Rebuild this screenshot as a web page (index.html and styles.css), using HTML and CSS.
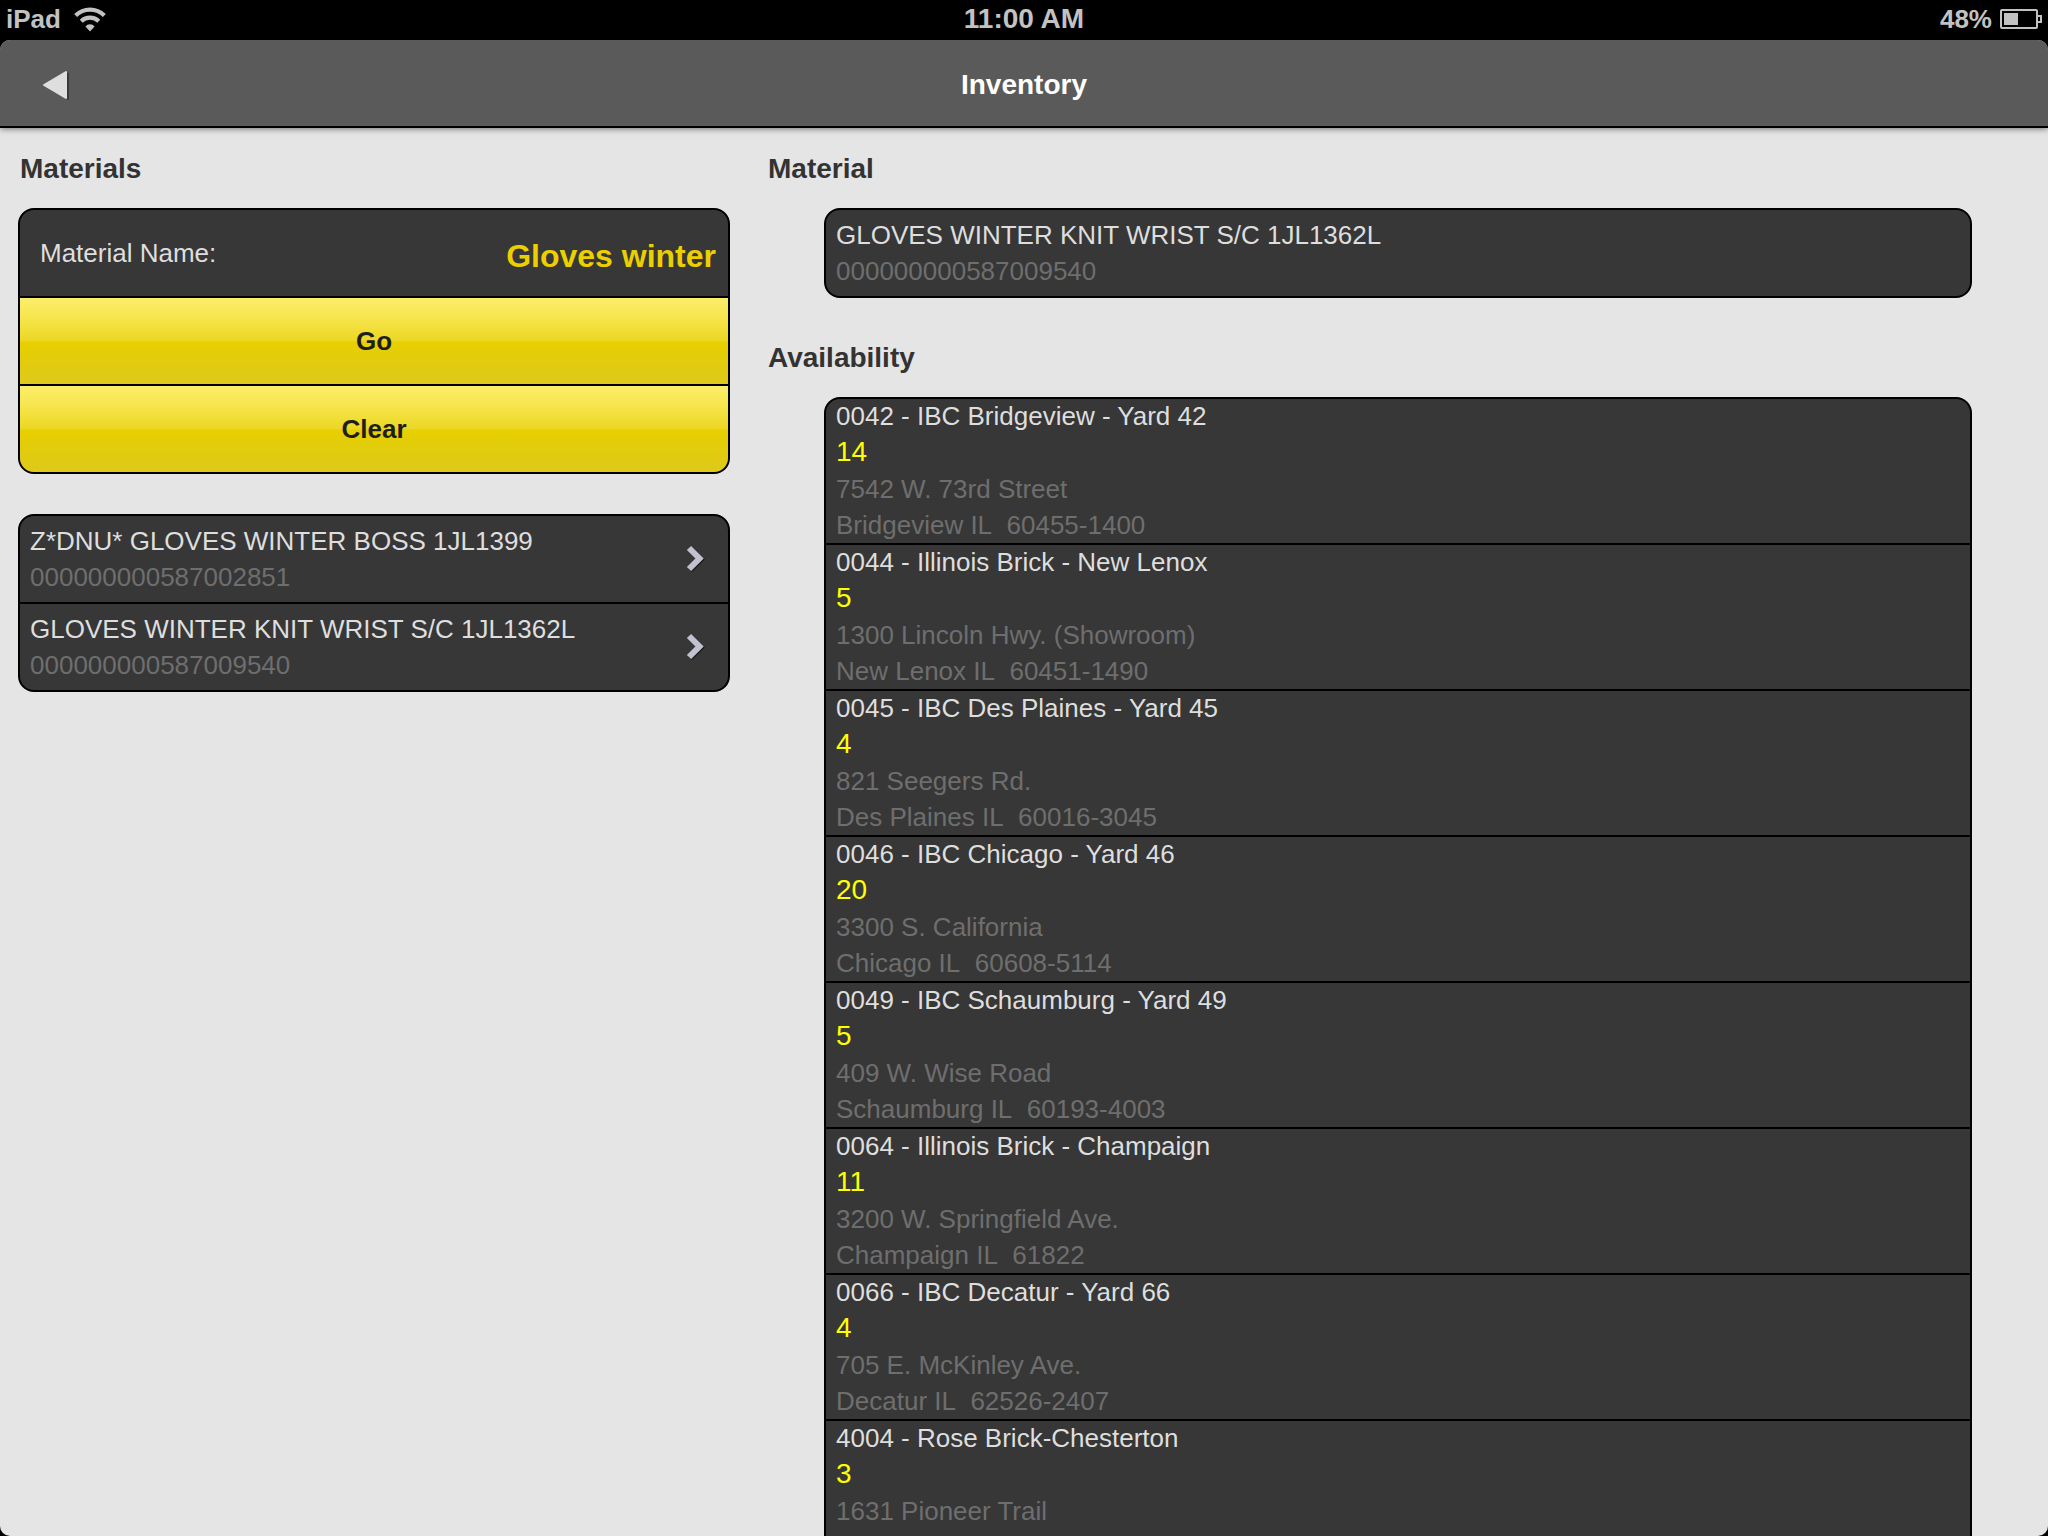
FILE: index.html
```
<!DOCTYPE html>
<html lang="en">
<head>
    <meta charset="UTF-8">
    <meta name="viewport" content="width=device-width, initial-scale=1">
    <title>Inventory</title>
    <link rel="stylesheet" href="styles.css">
</head>
<body>
<!-- Device status bar -->
<div class="status-bar">
    <div class="status-left">
        <span>iPad</span>
        <svg width="34" height="25" viewBox="0 0 32 24" aria-hidden="true">
            <path d="M2.2 8.2 A19.5 19.5 0 0 1 29.8 8.2" fill="none" stroke="#c2c2c2" stroke-width="4"/>
            <path d="M7.6 13.6 A12 12 0 0 1 24.4 13.6" fill="none" stroke="#c2c2c2" stroke-width="4"/>
            <path d="M16 23.5 L11.6 18.6 A6 6 0 0 1 20.4 18.6 Z" fill="#c2c2c2"/>
        </svg>
    </div>
    <div class="status-time">11:00 AM</div>
    <div class="status-right">
        <span>48%</span>
        <svg width="42" height="20" viewBox="0 0 42 20" aria-hidden="true">
            <rect x="1" y="1" width="36" height="18" rx="1" fill="none" stroke="#c2c2c2" stroke-width="2"/>
            <rect x="4" y="4" width="14" height="12" fill="#c2c2c2"/>
            <path d="M38 7 H41 V13 H38" fill="none" stroke="#c2c2c2" stroke-width="2"/>
        </svg>
    </div>
</div>

<div class="app">
    <header class="toolbar">
        <button type="button" class="back" aria-label="Back">
            <svg width="28" height="30" viewBox="0 0 28 30" aria-hidden="true">
                <path d="M3 15 L25 2.5 V28 Z" fill="#333" stroke="#333" stroke-width="2" stroke-linejoin="round" transform="translate(1 1)" opacity=".8"/>
                <path d="M2 15 L24 2 V28 Z" fill="#dedede" stroke="#dedede" stroke-width="2" stroke-linejoin="round"/>
            </svg>
        </button>
        <h1>Inventory</h1>
    </header>

    <main class="panes">
        <!-- Search form and results -->
        <section class="pane">
            <h2>Materials</h2>
            <form class="card">
                <div class="field">
                    <label for="material-name">Material Name:</label>
                    <input type="text" id="material-name" value="Gloves winter">
                </div>
                <button type="button" class="action">Go</button>
                <button type="button" class="action">Clear</button>
            </form>
            <ul class="card">
                <li>
                    <a href="#" class="material">
                        <span class="text">
                            <span class="name">Z*DNU* GLOVES WINTER BOSS 1JL1399</span>
                            <span class="muted">000000000587002851</span>
                        </span>
                        <svg width="20" height="28" viewBox="0 0 20 28" aria-hidden="true">
                            <path d="M4 4 L14.5 14.5 L4 25" fill="none" stroke="#1c1c1c" stroke-width="6"/>
                            <path d="M3 3 L13.5 13.5 L3 24" fill="none" stroke="#c2c1cf" stroke-width="6"/>
                        </svg>
                    </a>
                </li>
                <li>
                    <a href="#" class="material">
                        <span class="text">
                            <span class="name">GLOVES WINTER KNIT WRIST S/C 1JL1362L</span>
                            <span class="muted">000000000587009540</span>
                        </span>
                        <svg width="20" height="28" viewBox="0 0 20 28" aria-hidden="true">
                            <path d="M4 4 L14.5 14.5 L4 25" fill="none" stroke="#1c1c1c" stroke-width="6"/>
                            <path d="M3 3 L13.5 13.5 L3 24" fill="none" stroke="#c2c1cf" stroke-width="6"/>
                        </svg>
                    </a>
                </li>
            </ul>
        </section>

        <!-- Selected material and stock per yard -->
        <section class="pane detail">
            <h2>Material</h2>
            <div class="card">
                <div class="material">
                    <span class="text">
                        <span class="name">GLOVES WINTER KNIT WRIST S/C 1JL1362L</span>
                        <span class="muted">000000000587009540</span>
                    </span>
                </div>
            </div>

            <h2>Availability</h2>
            <ul class="card">
                <li class="yard">
                    <div class="name">0042 - IBC Bridgeview - Yard 42</div>
                    <div class="count">14</div>
                    <div class="muted">7542 W. 73rd Street</div>
                    <div class="muted">Bridgeview IL&nbsp; 60455-1400</div>
                </li>
                <li class="yard">
                    <div class="name">0044 - Illinois Brick - New Lenox</div>
                    <div class="count">5</div>
                    <div class="muted">1300 Lincoln Hwy. (Showroom)</div>
                    <div class="muted">New Lenox IL&nbsp; 60451-1490</div>
                </li>
                <li class="yard">
                    <div class="name">0045 - IBC Des Plaines - Yard 45</div>
                    <div class="count">4</div>
                    <div class="muted">821 Seegers Rd.</div>
                    <div class="muted">Des Plaines IL&nbsp; 60016-3045</div>
                </li>
                <li class="yard">
                    <div class="name">0046 - IBC Chicago - Yard 46</div>
                    <div class="count">20</div>
                    <div class="muted">3300 S. California</div>
                    <div class="muted">Chicago IL&nbsp; 60608-5114</div>
                </li>
                <li class="yard">
                    <div class="name">0049 - IBC Schaumburg - Yard 49</div>
                    <div class="count">5</div>
                    <div class="muted">409 W. Wise Road</div>
                    <div class="muted">Schaumburg IL&nbsp; 60193-4003</div>
                </li>
                <li class="yard">
                    <div class="name">0064 - Illinois Brick - Champaign</div>
                    <div class="count">11</div>
                    <div class="muted">3200 W. Springfield Ave.</div>
                    <div class="muted">Champaign IL&nbsp; 61822</div>
                </li>
                <li class="yard">
                    <div class="name">0066 - IBC Decatur - Yard 66</div>
                    <div class="count">4</div>
                    <div class="muted">705 E. McKinley Ave.</div>
                    <div class="muted">Decatur IL&nbsp; 62526-2407</div>
                </li>
                <li class="yard">
                    <div class="name">4004 - Rose Brick-Chesterton</div>
                    <div class="count">3</div>
                    <div class="muted">1631 Pioneer Trail</div>
                </li>
            </ul>
        </section>
    </main>
</div>
</body>
</html>
```

FILE: styles.css
```
* {
    box-sizing: border-box;
}
body {
    margin: 0;
    height: 100vh;
    display: flex;
    flex-direction: column;
    background: #000;
    font-family: "Liberation Sans", Arial, sans-serif;
    font-size: 26px;
    line-height: 36px;
}

/* status bar */
.status-bar {
    flex: none;
    height: 40px;
    padding: 0 6px 2px;
    display: grid;
    grid-template-columns: 1fr auto 1fr;
    align-items: center;
    color: #c2c2c2;
    font-weight: bold;
}
.status-left, .status-right {
    display: flex;
    align-items: center;
    gap: 12px;
}
.status-right {
    justify-content: flex-end;
    gap: 8px;
}
.status-time {
    font-size: 28px;
}

.app {
    flex: 1;
    min-height: 0;
    display: flex;
    flex-direction: column;
    overflow: hidden;
    border-radius: 10px;
    background: #e5e5e5;
}

/* toolbar */
.toolbar {
    flex: none;
    height: 88px;
    padding: 4px 42px 0;
    display: grid;
    grid-template-columns: 1fr auto 1fr;
    align-items: center;
    background: #5a5a5a;
    border-bottom: 2px solid #000;
    box-shadow: 0 1px 6px rgba(0,0,0,0.5);
}
.toolbar h1 {
    margin: 0;
    font-size: 28px;
    color: #fff;
}
.back {
    justify-self: start;
    display: flex;
    padding: 0;
    border: 0;
    background: none;
    cursor: pointer;
}

/* panes */
.panes {
    flex: 1;
    min-height: 0;
    display: grid;
    grid-template-columns: 748px 1fr;
}
.pane {
    min-height: 0;
    overflow-y: auto;
    scrollbar-width: none;
}
h2 {
    margin: 23px 20px 21px;
    font-size: 28px;
    line-height: 36px;
    color: #333;
}
.card {
    margin: 0 18px 40px;
    padding: 0;
    list-style: none;
    overflow: hidden;
    background: #373737;
    border: 2px solid #000;
    border-radius: 16px;
}
.detail .card {
    margin: 0 76px 42px;
}
.card li + li {
    border-top: 2px solid #000;
}
.name {
    color: #dedede;
}
.muted {
    color: #6e6e6e;
}

/* search form */
.field {
    height: 86px;
    padding: 0 12px 0 20px;
    display: flex;
    align-items: center;
    justify-content: space-between;
}
.field label {
    color: #dedede;
}
.field input {
    width: 400px;
    padding: 6px 0 0;
    border: 0;
    outline: 0;
    background: none;
    font: bold 32px "Liberation Sans", Arial, sans-serif;
    color: #ebcf00;
    text-align: right;
}
.action {
    display: block;
    width: 100%;
    height: 88px;
    padding: 0;
    border: 0;
    border-top: 2px solid #000;
    background: linear-gradient(#fcee6c, #f5e345 28%, #ebd723 50%, #e8d000 51%, #e3cd08 65%, #dfc91b);
    font: bold 26px "Liberation Sans", Arial, sans-serif;
    color: #1e1e1e;
    cursor: pointer;
}

/* list rows */
.material {
    min-height: 86px;
    padding: 7px 22px 7px 10px;
    display: flex;
    align-items: center;
    justify-content: space-between;
    text-decoration: none;
}
.text {
    display: flex;
    flex-direction: column;
}
.yard {
    box-sizing: content-box;
    min-height: 144px;
    padding: 0 10px;
}
.yard .name {
    line-height: 34px;
}
.count {
    font-size: 28px;
    line-height: 38px;
    color: #ff0;
}
```
